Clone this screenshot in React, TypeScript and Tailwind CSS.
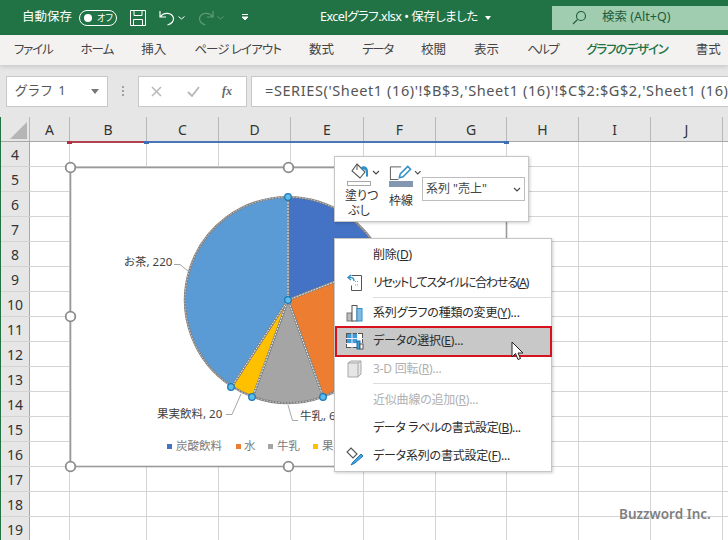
import type { ReactNode } from "react";

const COLS = [
  { label: "A", w: 40 },
  { label: "B", w: 77 },
  { label: "C", w: 72 },
  { label: "D", w: 72 },
  { label: "E", w: 73 },
  { label: "F", w: 72 },
  { label: "G", w: 71 },
  { label: "H", w: 72 },
  { label: "I", w: 72 },
  { label: "J", w: 72 },
  { label: "", w: 10 },
];
const ROWS = [4, 5, 6, 7, 8, 9, 10, 11, 12, 13, 14, 15, 16, 17, 18, 19];
const TABS = [
  { label: "ファイル", cls: "tracking-[-1.2px]" },
  { label: "ホーム", cls: "tracking-[-1px]" },
  { label: "挿入", cls: "" },
  { label: "ページ レイアウト", cls: "tracking-[-0.9px]" },
  { label: "数式", cls: "" },
  { label: "データ", cls: "tracking-[-1.3px]" },
  { label: "校閲", cls: "" },
  { label: "表示", cls: "" },
  { label: "ヘルプ", cls: "tracking-[-1.6px]" },
  { label: "グラフのデザイン", cls: "tracking-[-1.1px] font-medium text-[#217346]" },
  { label: "書式", cls: "" },
];

const CX = 288;
const CY = 300;
const R = 103;

const pt = (deg: number, r = R) => {
  const a = (deg * Math.PI) / 180;
  return [CX + r * Math.sin(a), CY - r * Math.cos(a)];
};

const slice = (from: number, to: number) => {
  const [x1, y1] = pt(from);
  const [x2, y2] = pt(to);
  const large = to - from > 180 ? 1 : 0;
  return `M${CX} ${CY}L${x1} ${y1}A${R} ${R} 0 ${large} 1 ${x2} ${y2}Z`;
};

const SLICES = [
  { from: 0, to: 68.6, color: "#4472c4" },
  { from: 68.6, to: 160, color: "#ed7d31" },
  { from: 160, to: 200, color: "#a5a5a5" },
  { from: 200, to: 213, color: "#ffc000" },
  { from: 213, to: 360, color: "#5b9bd5" },
];

const Chart = () => (
  <div className="absolute left-0 top-0 h-[540px] w-[728px] overflow-hidden">
    <svg width="728" height="540" className="absolute left-0 top-0">
      <rect x="70.5" y="167.5" width="436" height="299" fill="#fff" stroke="#9a9a9a" strokeWidth="1.6" />
      {SLICES.map((s) => (
        <path key={s.from} d={slice(s.from, s.to)} fill={s.color} stroke="#808080" strokeWidth="2.2" />
      ))}
      {SLICES.map((s) => (
        <path key={s.from} d={slice(s.from, s.to)} fill="none" stroke="#fff" strokeWidth="0.8" strokeOpacity="0.8" strokeDasharray="1.5 1.5" />
      ))}
      <path d="M174 264.500L180 264.500L188 271" fill="none" stroke="#a6a6a6" />
      <path d="M226 414.500L232 414.500L241 394" fill="none" stroke="#a6a6a6" />
      <path d="M288 405L292.500 420.500L298 420.500" fill="none" stroke="#a6a6a6" />
      <rect x="167" y="444" width="5" height="5" fill="#4472c4" />
      <rect x="236" y="444" width="5" height="5" fill="#ed7d31" />
      <rect x="268" y="444" width="5" height="5" fill="#a5a5a5" />
      <rect x="313" y="444" width="5" height="5" fill="#ffc000" />
      {[[288, 197], [288, 300], [231, 387], [252, 397], [323, 397]].map(([x, y]) => (
        <circle key={x * y} cx={x} cy={y} r="3.300" fill="#61bbec" stroke="#1c7ab5" strokeWidth="1.300" />
      ))}
      {[[70.5, 167.5], [288.5, 167.5], [70.5, 316.5], [70.5, 466.5], [288.5, 466.5]].map(([x, y]) => (
        <circle key={x * y} cx={x} cy={y} r="4.800" fill="#fff" stroke="#8c8c8c" strokeWidth="1.800" />
      ))}
    </svg>
    <span className="absolute left-[124px] top-[254px] text-[11.5px] leading-4 text-[#404040]">お茶, 220</span>
    <span className="absolute left-[157px] top-[406px] text-[11.5px] leading-4 text-[#404040]">果実飲料, 20</span>
    <span className="absolute left-[300px] top-[408px] text-[11.5px] leading-4 text-[#404040]">牛乳, 60</span>
    <span className="absolute left-[176px] top-[438px] text-[11.5px] leading-4 text-[#7a7a7a]">炭酸飲料</span>
    <span className="absolute left-[244px] top-[438px] text-[11.5px] leading-4 text-[#7a7a7a]">水</span>
    <span className="absolute left-[277px] top-[438px] text-[11.5px] leading-4 text-[#7a7a7a]">牛乳</span>
    <span className="absolute left-[322px] top-[438px] text-[11.5px] leading-4 text-[#7a7a7a]">果実飲料</span>
  </div>
);

const Chevron = ({ className = "" }: { className?: string }) => (
  <svg width="8" height="5" viewBox="0 0 8 5" className={className}>
    <path d="M1 1l3 3 3-3" fill="none" stroke="#444" strokeWidth="1.100" />
  </svg>
);

const MiniToolbar = () => (
  <div className="absolute left-[334px] top-[156px] flex h-[66px] w-[195px] border border-[#c6c6c6] bg-white pl-[10px] shadow-[1px_1px_3px_rgba(0,0,0,0.2)]">
    <div className="flex w-[36px] flex-col pt-[6px]">
      <div className="flex h-[18px] items-center">
        <svg width="24" height="18" viewBox="0 0 24 18" className="ml-[3px]">
          <path d="M9 1l8 8-5 6-8-7z" fill="none" stroke="#555" strokeWidth="1.100" />
          <path d="M9 1v6" stroke="#555" strokeWidth="1" />
          <path d="M13 4c3-2 7 0 7 4v5c0 1-2 1-2 0V9c0-2-2-3-4-2z" fill="#2f8fc9" />
        </svg>
        <Chevron />
      </div>
      <div className="ml-[2px] h-[5px] w-[24px] border border-[#a8a8a8]" />
      <div className="mt-[2px] w-[28px] text-center text-[12px] leading-[15px] whitespace-nowrap text-[#333]">
        <div>塗りつ</div>
        <div>ぶし</div>
      </div>
    </div>
    <div className="ml-[8px] flex w-[32px] flex-col pt-[7px]">
      <div className="flex h-[17px] items-center">
        <svg width="24" height="17" viewBox="0 0 24 17">
          <path d="M1.500 16V2.500H13M1 16h9" fill="none" stroke="#555" strokeWidth="1" />
          <path d="M11 14l1-4 8-8 3 3-8 8z" fill="#fff" stroke="#2f8fc9" strokeWidth="1.600" />
        </svg>
        <Chevron className="ml-[2px]" />
      </div>
      <div className="h-[6px] w-[24px] bg-[#8497b0]" />
      <div className="mt-[6px] w-[24px] text-center text-[12px] leading-[15px] whitespace-nowrap text-[#333]">枠線</div>
    </div>
    <div className="ml-[1px] mt-[20px] flex h-[24px] w-[103px] items-center justify-between border border-[#bdbdbd] pl-[3px] pr-[3px] text-[12px] text-[#444]">
      <span>系列 "売上"</span>
      <Chevron />
    </div>
  </div>
);

const ResetIcon = () => (
  <svg width="18" height="20" viewBox="0 0 18 20">
    <path d="M5.500 2.500h10v15h-10v-5" fill="#fff" stroke="#555" />
    <path d="M9 12h3M9 8.500h3" stroke="#999" strokeDasharray="1 1" />
    <path d="M8 8c0-3-2-4-5-3.500M5 2L2 4.500 5 7" fill="none" stroke="#2f8fc9" strokeWidth="1.400" />
  </svg>
);

const BarsIcon = () => (
  <svg width="18" height="18" viewBox="0 0 18 18">
    <rect x="1" y="9" width="5" height="8" fill="#bdbdbd" stroke="#777" />
    <rect x="6" y="1.500" width="5" height="15.500" fill="#fff" stroke="#555" />
    <rect x="11" y="4.500" width="5" height="12.500" fill="#7fbde8" stroke="#2f8fc9" />
  </svg>
);

const DataIcon = () => (
  <svg width="18" height="17" viewBox="0 0 18 17">
    <rect x="0.500" y="0.500" width="16" height="14" fill="#fff" stroke="#555" />
    <path d="M1 1h10v9H1z" fill="#3f9ad6" />
    <path d="M0 5.500h17M0 10.500h17M6 0v15M11.500 0v15" stroke="#eef" strokeWidth="1" />
    <rect x="11" y="8" width="3" height="8" fill="#3f9ad6" stroke="#1d6ca5" />
    <rect x="14" y="11" width="3" height="5" fill="#fff" stroke="#555" />
  </svg>
);

const CubeIcon = () => (
  <svg width="16" height="18" viewBox="0 0 16 18">
    <path d="M1 3l3-2h10v13l-3 3H1z" fill="#e6e6e6" stroke="#a8a8a8" />
    <path d="M1 3h10v14M11 3l3-2" fill="none" stroke="#a8a8a8" />
  </svg>
);

const FormatIcon = () => (
  <svg width="20" height="19" viewBox="0 0 20 19">
    <path d="M6 1l6 6-4 4-6-6z" fill="none" stroke="#555" strokeWidth="1.100" />
    <path d="M8 15l8-8 2 2-8 7-4 2z" fill="#4aa5dc" stroke="#1d7ab5" />
  </svg>
);

type MenuItemProps = { icon?: ReactNode; children: ReactNode; disabled?: boolean; active?: boolean; tight?: string };

const MenuItem = ({ icon, children, disabled, active, tight = "tracking-[-0.2px]" }: MenuItemProps) => (
  <div className={`flex h-[28px] items-center ${active ? "bg-[#c8c8c8]" : ""}`}>
    <div className="flex w-[38px] shrink-0 justify-center pl-[2px]">{icon}</div>
    <span className={`whitespace-nowrap text-[12px] ${tight} ${disabled ? "text-[#b0b0b0]" : "text-[#2b2b2b]"}`}>{children}</span>
  </div>
);

const ContextMenu = () => (
  <div className="absolute left-[334px] top-[238px] h-[234px] w-[218px] border border-[#c6c6c6] bg-white pt-[2px] shadow-[1px_1px_3px_rgba(0,0,0,0.2)]">
    <MenuItem>
      削除(<u>D</u>)
    </MenuItem>
    <MenuItem icon={<ResetIcon />} tight="tracking-[-1.2px]">
      リセットしてスタイルに合わせる(<u>A</u>)
    </MenuItem>
    <div className="ml-[38px] h-[2px] border-t border-[#dcdcdc]" />
    <MenuItem icon={<BarsIcon />}>
      系列グラフの種類の変更(<u>Y</u>)...
    </MenuItem>
    <MenuItem icon={<DataIcon />} active>
      データの選択(<u>E</u>)...
    </MenuItem>
    <MenuItem icon={<CubeIcon />} disabled>
      3-D 回転(<u>R</u>)...
    </MenuItem>
    <div className="ml-[38px] h-[3px] border-t border-[#dcdcdc]" />
    <MenuItem disabled>
      近似曲線の追加(<u>R</u>)...
    </MenuItem>
    <MenuItem tight="tracking-[-0.4px]">
      データ ラベルの書式設定(<u>B</u>)...
    </MenuItem>
    <MenuItem icon={<FormatIcon />}>
      データ系列の書式設定(<u>F</u>)...
    </MenuItem>
    <div className="pointer-events-none absolute left-[0px] top-[87px] h-[31px] w-[217px] border-2 border-[#d5121e]" />
    <svg width="16" height="21" viewBox="0 0 16 21" className="absolute left-[176px] top-[102px]">
      <path d="M1 1v15l3.500-3.500 2.500 6 2.500-1-2.500-5.500h5z" fill="#fff" stroke="#222" strokeWidth="1" />
    </svg>
  </div>
);

const TitleBar = () => (
  <div className="flex h-[35px] items-center bg-[#217346] pl-[22px] text-white">
    <span className="text-[12.5px]">自動保存</span>
    <div className="ml-[7px] flex h-[16px] w-[38px] items-center rounded-full border border-white pl-[4px]">
      <div className="h-[8px] w-[8px] rounded-full bg-white" />
      <span className="ml-[5px] text-[9px] leading-none">オフ</span>
    </div>
    <svg width="16" height="16" viewBox="0 0 16 16" className="ml-[13px]">
      <path d="M.5.500h15v15H.5zM4 .500v5h8v-5M3.500 15.500v-6h9v6" fill="none" stroke="#fff" />
    </svg>
    <svg width="16" height="16" viewBox="0 0 16 16" className="ml-[13px]">
      <path d="M1 1v6h6M1.500 7C4 2 13 2 14.500 8c.5 3-2 6-6 7" fill="none" stroke="#fff" strokeWidth="1.200" />
    </svg>
    <svg width="7" height="4" viewBox="0 0 7 4" className="ml-[3px]">
      <path d="M.5.500l3 2.500 3-2.500" fill="none" stroke="#fff" />
    </svg>
    <svg width="16" height="16" viewBox="0 0 16 16" className="ml-[13px]">
      <path d="M15 1v6H9M14.500 7C12 2 3 2 1.500 8c-.5 3 2 6 6 7" fill="none" stroke="#5f9b7b" strokeWidth="1.200" />
    </svg>
    <svg width="7" height="4" viewBox="0 0 7 4" className="ml-[3px]">
      <path d="M.5.500l3 2.500 3-2.500" fill="none" stroke="#5f9b7b" />
    </svg>
    <svg width="8" height="7" viewBox="0 0 8 7" className="ml-[17px]">
      <path d="M1 .500h6M1 3l3 3 3-3z" fill="#fff" stroke="#fff" strokeWidth="1" />
    </svg>
    <span className="ml-[71px] whitespace-nowrap text-[12.5px] tracking-[-0.5px]">Excelグラフ.xlsx • 保存しました</span>
    <svg width="7" height="4" viewBox="0 0 7 4" className="ml-[7px]">
      <path d="M0 0h6L3 4z" fill="#fff" />
    </svg>
    <div className="ml-auto flex h-[24px] w-[176px] items-center bg-[#a0cdb0] pl-[20px] text-[#1d5c3c]">
      <svg width="15" height="15" viewBox="0 0 15 15">
        <circle cx="9" cy="6" r="4.500" fill="none" stroke="#1d5c3c" strokeWidth="1.100" />
        <path d="M5.500 9.500L1 14" stroke="#1d5c3c" strokeWidth="1.100" />
      </svg>
      <span className="ml-[15px] text-[12.5px]">検索 (Alt+Q)</span>
    </div>
  </div>
);

const RibbonTabs = () => (
  <div className="relative z-10 flex h-[30px] items-center gap-[28px] bg-[#f3f2f1] pl-[14px] text-[12.5px] text-[#444] shadow-[0_2px_4px_rgba(0,0,0,0.12)]">
    {TABS.map((t) => (
      <span key={t.label} className={`whitespace-nowrap ${t.cls}`}>
        {t.label}
      </span>
    ))}
  </div>
);

const FormulaBar = () => (
  <div className="flex h-[52px] items-center bg-[#e6e6e6] pl-[6px]">
    <div className="flex h-[31px] w-[102px] items-center justify-between border border-[#c8c8c8] bg-white pl-[8px] pr-[8px] text-[13px] tracking-[1.5px] text-[#555]">
      <span>グラフ 1</span>
      <svg width="8" height="5" viewBox="0 0 8 5">
        <path d="M0 0h8L4 5z" fill="#777" />
      </svg>
    </div>
    <div className="flex w-[30px] flex-col items-center gap-[2px]">
      <div className="h-[2px] w-[2px] bg-[#a0a0a0]" />
      <div className="h-[2px] w-[2px] bg-[#a0a0a0]" />
      <div className="h-[2px] w-[2px] bg-[#a0a0a0]" />
    </div>
    <div className="flex h-[31px] w-[109px] items-center border border-[#c8c8c8] bg-white pl-[12px]">
      <svg width="11" height="11" viewBox="0 0 11 11">
        <path d="M1 1l9 9M10 1l-9 9" stroke="#b8b8b8" strokeWidth="1.500" />
      </svg>
      <svg width="13" height="11" viewBox="0 0 13 11" className="ml-[25px]">
        <path d="M1 6l4 4 7-9" fill="none" stroke="#b8b8b8" strokeWidth="1.800" />
      </svg>
      <span className="ml-[22px] font-['Liberation_Serif',serif] text-[12px] font-bold italic text-[#666]">fx</span>
    </div>
    <div className="ml-[4px] flex h-[31px] flex-1 items-center overflow-hidden border-y border-l border-[#c8c8c8] bg-white pl-[13px] text-[14.5px] tracking-[0.6px] whitespace-nowrap text-[#555]">
      =SERIES('Sheet1 (16)'!$B$3,'Sheet1 (16)'!$C$2:$G$2,'Sheet1 (16)'!$
    </div>
  </div>
);

const Sheet = () => (
  <div className="flex-1 overflow-hidden border-l border-[#217346] bg-white">
    <div className="flex h-[25px] border-b border-[#a8a8a8] bg-[#e6e6e6]">
      <div className="flex w-[29px] shrink-0 items-end justify-end border-r border-[#b8b8b8] pb-[2px] pr-[2px]">
        <div className="h-0 w-0 border-b-[17px] border-l-[17px] border-b-[#b5b5b5] border-l-transparent" />
      </div>
      {COLS.map((c) => (
        <div
          key={c.label}
          style={{ width: c.w }}
          className="flex shrink-0 items-center justify-center border-r border-[#b8b8b8] text-[14px] text-[#333]"
        >
          {c.label}
        </div>
      ))}
    </div>
    {ROWS.map((r) => (
      <div key={r} className="flex h-[25px] border-b border-[#d4d4d4]">
        <div className="flex w-[29px] shrink-0 items-center justify-center border-r border-[#a8a8a8] bg-[#e6e6e6] text-[14px] text-[#333]">
          {r}
        </div>
        {COLS.map((c) => (
          <div key={c.label} style={{ width: c.w }} className="shrink-0 border-r border-[#d4d4d4]" />
        ))}
      </div>
    ))}
  </div>
);

const RangeMarks = () => (
  <>
    <div className="absolute left-[69px] top-[141px] h-[2px] w-[77px] bg-[#b0404e]" />
    <div className="absolute left-[67px] top-[141px] h-[3px] w-[5px] bg-[#b0303e]" />
    <div className="absolute left-[147px] top-[141px] h-[2px] w-[359px] bg-[#4a76b8]" />
    <div className="absolute left-[144px] top-[141px] h-[3px] w-[5px] bg-[#3e6db5]" />
    <div className="absolute left-[504px] top-[141px] h-[3px] w-[5px] bg-[#3e6db5]" />
  </>
);

export default function App() {
  return (
    <div className="relative flex h-[540px] w-[728px] flex-col overflow-hidden bg-white font-['Noto_Sans','Noto_Sans_CJK_JP',sans-serif] [font-feature-settings:'palt']">
      <TitleBar />
      <RibbonTabs />
      <FormulaBar />
      <Sheet />
      <Chart />
      <RangeMarks />
      <MiniToolbar />
      <ContextMenu />
      <span className="absolute left-[619px] top-[504px] text-[13.5px] leading-5 font-semibold text-[#7f7f7f]">Buzzword Inc.</span>
    </div>
  );
}
